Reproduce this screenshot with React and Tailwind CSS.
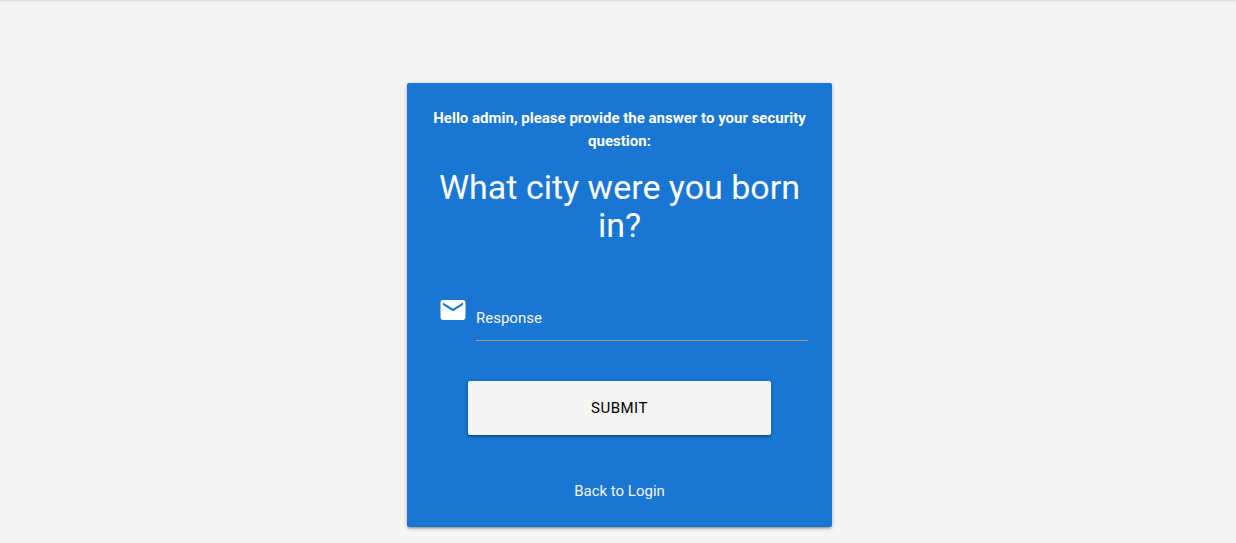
import React from "react";

export default function App() {
  return (
    <div className="min-h-screen bg-[#f5f5f5] font-[Roboto,sans-serif] text-[15px] text-white">
      <div className="h-px bg-[#e0e0e0] shadow-sm" />
      <main className="flex justify-center pt-[82px] pr-4 pb-4 pl-[19px]">
        <form
          className="w-full max-w-[425px] rounded-xs bg-[#1976d2] px-6 pt-6 pb-6 text-center shadow-[0_2px_2px_0_rgba(0,0,0,0.14),0_3px_1px_-2px_rgba(0,0,0,0.12),0_1px_5px_0_rgba(0,0,0,0.2)]"
          onSubmit={(e) => e.preventDefault()}
        >
          <p className="leading-[23px] font-bold">
            Hello admin, please provide the answer to your security question:
          </p>
          <h1 className="mt-[15px] text-[34px] leading-[38px]">What city were you born in?</h1>
          <div className="mt-[49px] flex pl-[7px]">
            <svg viewBox="0 0 24 24" className="mt-0.5 size-[30px] shrink-0 fill-white" aria-hidden="true">
              <path d="M20 4H4c-1.1 0-1.99.9-1.99 2L2 18c0 1.1.9 2 2 2h16c1.1 0 2-.9 2-2V6c0-1.1-.9-2-2-2zm0 4l-8 5-8-5V6l8 5 8-5v2z" />
            </svg>
            <div className="ml-2 grow">
              <input
                type="text"
                aria-label="Response"
                placeholder="Response"
                className="h-12 w-full border-b border-[#9e9e9e] bg-transparent pt-0.5 outline-none placeholder:text-[#f5f5f5]"
              />
            </div>
          </div>
          <button
            type="submit"
            className="mt-10 h-[54px] w-[303px] max-w-full rounded-xs bg-[#f5f5f5] tracking-[0.5px] text-black uppercase shadow-[0_2px_2px_0_rgba(0,0,0,0.14),0_3px_1px_-2px_rgba(0,0,0,0.12),0_1px_5px_0_rgba(0,0,0,0.2)]"
          >
            Submit
          </button>
          <p className="mt-11 leading-6 text-[#f5f5f5]">
            <a href="#login">Back to Login</a>
          </p>
        </form>
      </main>
    </div>
  );
}
